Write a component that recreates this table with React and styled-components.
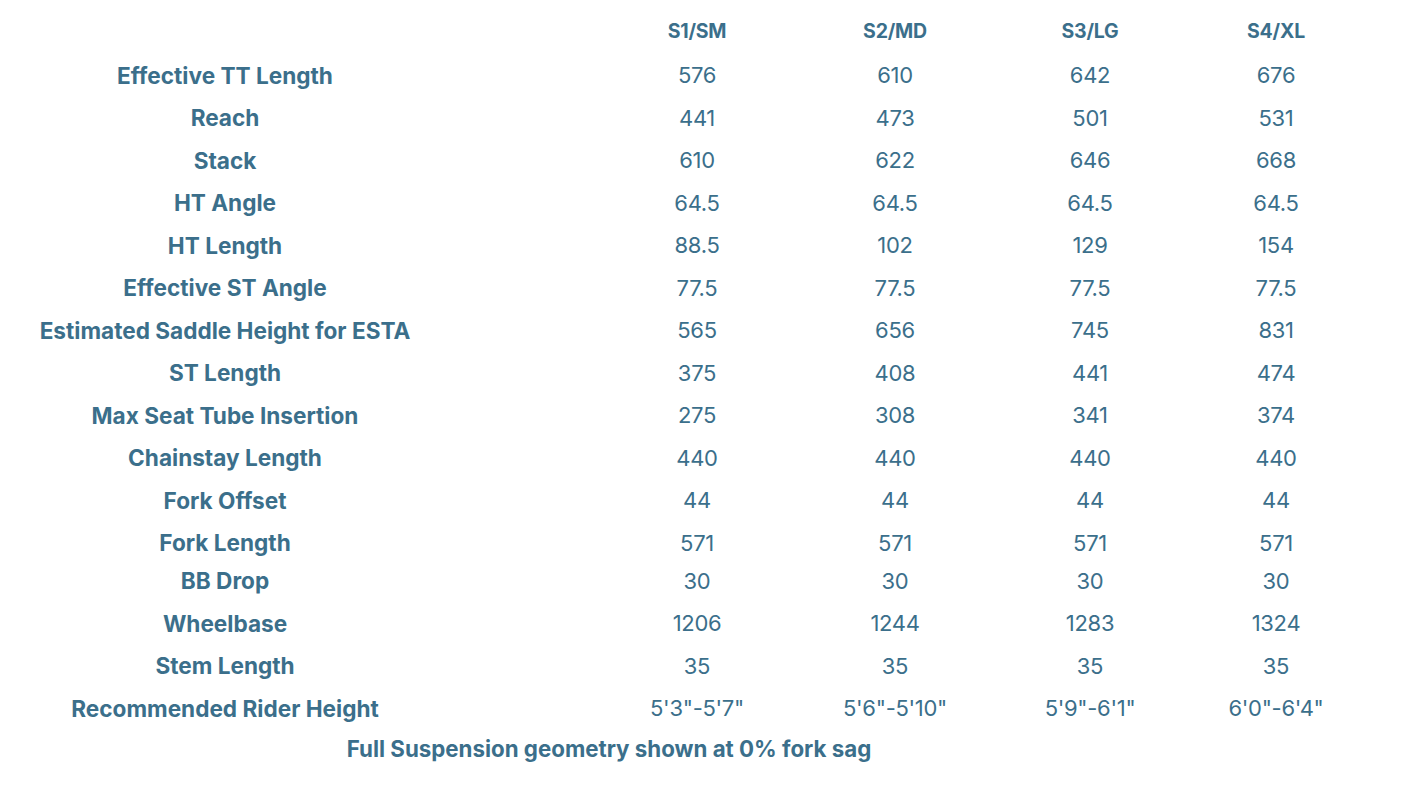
import React from 'react'
import styled, { createGlobalStyle } from 'styled-components'

const GlobalStyle = createGlobalStyle`
  body {
    margin: 0;
    background: #ffffff;
    font-family: Inter, "Noto Sans", sans-serif;
  }
`

const sizes = ['S1/SM', 'S2/MD', 'S3/LG', 'S4/XL']

const rows = [
  ['Effective TT Length', '576', '610', '642', '676'],
  ['Reach', '441', '473', '501', '531'],
  ['Stack', '610', '622', '646', '668'],
  ['HT Angle', '64.5', '64.5', '64.5', '64.5'],
  ['HT Length', '88.5', '102', '129', '154'],
  ['Effective ST Angle', '77.5', '77.5', '77.5', '77.5'],
  ['Estimated Saddle Height for ESTA', '565', '656', '745', '831'],
  ['ST Length', '375', '408', '441', '474'],
  ['Max Seat Tube Insertion', '275', '308', '341', '374'],
  ['Chainstay Length', '440', '440', '440', '440'],
  ['Fork Offset', '44', '44', '44', '44'],
  ['Fork Length', '571', '571', '571', '571'],
  ['BB Drop', '30', '30', '30', '30', true],
  ['Wheelbase', '1206', '1244', '1283', '1324'],
  ['Stem Length', '35', '35', '35', '35'],
  ['Recommended Rider Height', `5'3"-5'7"`, `5'6"-5'10"`, `5'9"-6'1"`, `6'0"-6'4"`],
]

const Geometry = () => {
  return (
    <Wrapper>
      <GlobalStyle />
      <HeadRow>
        <Blank />
        {sizes.map((s) => (
          <SizeHead key={s}>{s}</SizeHead>
        ))}
      </HeadRow>
      {rows.map(([label, a, b, c, d, compact]) => (
        <Row key={label} $compact={compact}>
          <Label>{label}</Label>
          <Value>{a}</Value>
          <Value>{b}</Value>
          <Value>{c}</Value>
          <Value>{d}</Value>
        </Row>
      ))}
      <Note>Full Suspension geometry shown at 0% fork sag</Note>
    </Wrapper>
  )
}

export default Geometry

const Wrapper = styled.div`
  width: 1401px;
  padding-top: 7px;
  color: #3b6f8b;
  display: flex;
  flex-direction: column;
`
const cols = `450px 150px 194px 202px 188px 184px`

const HeadRow = styled.div`
  display: grid;
  grid-template-columns: ${cols};
  height: 47px;
  align-items: center;
`
const Blank = styled.div`
  grid-column: 1 / 3;
`
const SizeHead = styled.div`
  text-align: center;
  font-size: 19.5px;
  font-weight: 700;
  letter-spacing: -0.2px;
`
const Row = styled.div`
  display: grid;
  grid-template-columns: ${cols};
  height: ${(p) => (p.$compact ? '38px' : '42.5px')};
  padding-bottom: ${(p) => (p.$compact ? '5px' : '0')};
  box-sizing: border-box;
  align-items: center;
`
const Label = styled.div`
  grid-column: 1 / 2;
  text-align: center;
  font-size: 22.6px;
  font-weight: 700;
  white-space: nowrap;
  & + div {
    grid-column-start: 3;
  }
`
const Value = styled.div`
  text-align: center;
  font-size: 22px;
  font-weight: 400;
  letter-spacing: -0.3px;
`
const Note = styled.div`
  width: 1218px;
  height: 37px;
  display: flex;
  align-items: center;
  justify-content: center;
  font-size: 22.3px;
  font-weight: 700;
`
